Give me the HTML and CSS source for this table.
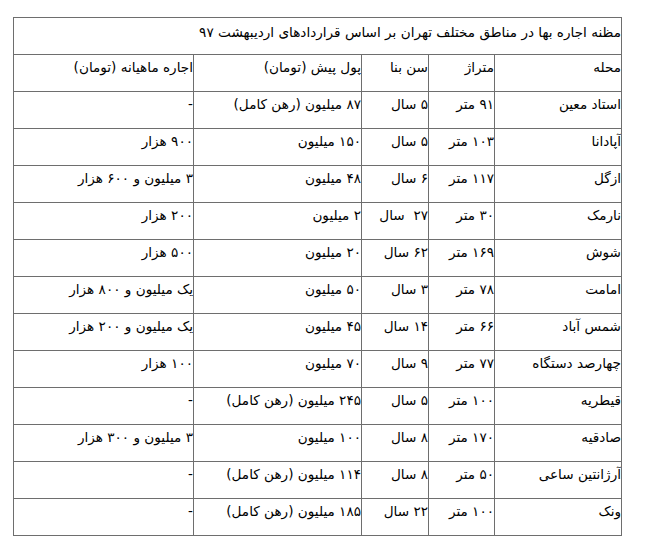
FILE: index.html
```html
<!DOCTYPE html>
<html lang="fa" dir="rtl">
<head>
<meta charset="utf-8">
<title>مظنه اجاره بها</title>
<link rel="stylesheet" href="styles.css">
</head>
<body>
<table class="rent">
  <colgroup>
    <col class="c-area">
    <col class="c-size">
    <col class="c-age">
    <col class="c-deposit">
    <col class="c-rent">
  </colgroup>
  <tr><td colspan="5" class="title">مظنه اجاره بها در مناطق مختلف تهران بر اساس قراردادهای اردیبهشت ۹۷</td></tr>
  <tr><td>محله</td><td>متراژ</td><td>سن بنا</td><td>پول پیش (تومان)</td><td>اجاره ماهیانه (تومان)</td></tr>
  <tr><td>استاد معین</td><td>۹۱ متر</td><td>۵ سال</td><td>۸۷ میلیون (رهن کامل)</td><td>-</td></tr>
  <tr><td>آپادانا</td><td>۱۰۳ متر</td><td>۵ سال</td><td>۱۵۰ میلیون</td><td>۹۰۰ هزار</td></tr>
  <tr><td>ازگل</td><td>۱۱۷ متر</td><td>۶ سال</td><td>۴۸ میلیون</td><td>۳ میلیون و ۶۰۰ هزار</td></tr>
  <tr><td>نارمک</td><td>۳۰ متر</td><td>۲۷&nbsp; سال</td><td>۲ میلیون</td><td>۲۰۰ هزار</td></tr>
  <tr><td>شوش</td><td>۱۶۹ متر</td><td>۶۲ سال</td><td>۲۰ میلیون</td><td>۵۰۰ هزار</td></tr>
  <tr><td>امامت</td><td>۷۸ متر</td><td>۳ سال</td><td>۵۰ میلیون</td><td>یک میلیون و ۸۰۰ هزار</td></tr>
  <tr><td>شمس آباد</td><td>۶۶ متر</td><td>۱۴ سال</td><td>۴۵ میلیون</td><td>یک میلیون و ۲۰۰ هزار</td></tr>
  <tr><td>چهارصد دستگاه</td><td>۷۷ متر</td><td>۹ سال</td><td>۷۰ میلیون</td><td>۱۰۰ هزار</td></tr>
  <tr><td>قیطریه</td><td>۱۰۰ متر</td><td>۵ سال</td><td>۲۴۵ میلیون (رهن کامل)</td><td>-</td></tr>
  <tr><td>صادقیه</td><td>۱۷۰ متر</td><td>۸ سال</td><td>۱۰۰ میلیون</td><td>۳ میلیون و ۳۰۰ هزار</td></tr>
  <tr><td>آرژانتین ساعی</td><td>۵۰ متر</td><td>۸ سال</td><td>۱۱۴ میلیون (رهن کامل)</td><td>-</td></tr>
  <tr><td>ونک</td><td>۱۰۰ متر</td><td>۲۲ سال</td><td>۱۸۵ میلیون (رهن کامل)</td><td>-</td></tr>
</table>
</body>
</html>
```
FILE: styles.css
```css
html, body {
  margin: 0;
  padding: 0;
  background: #ffffff;
}
body {
  padding: 17px 31px 0 15px;
  font-family: "DejaVu Sans", sans-serif;
  color: #000000;
}
.rent {
  border-collapse: collapse;
  table-layout: fixed;
  width: 608px;
  font-size: 13.6px;
  line-height: 19px;
}
.c-area { width: 127px; }
.c-size { width: 66px; }
.c-age { width: 67px; }
.c-deposit { width: 168px; }
.c-rent { width: 180px; }
.rent td {
  border: 1px solid #6e6e6e;
  height: 37px;
  padding: 3px 0 0 0;
  box-sizing: border-box;
  vertical-align: top;
  text-align: right;
  white-space: nowrap;
  overflow: hidden;
}
.rent td.title {
  padding-top: 5px;
}
```
